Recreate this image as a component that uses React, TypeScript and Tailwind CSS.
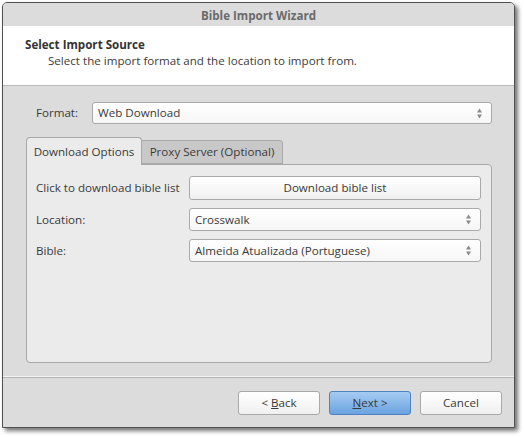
import React from "react";

function Spin() {
  return (
    <svg width="7" height="13" viewBox="0 0 7 13" className="shrink-0">
      <path d="M3.5 1.5 L6 5.5 L1 5.5 Z" fill="#8a8a8a" />
      <path d="M1 7.5 L6 7.5 L3.5 11.5 Z" fill="#8a8a8a" />
    </svg>
  );
}

function Combo({ text, className }: { text: string; className: string }) {
  return (
    <div
      className={
        "flex items-center justify-between rounded-[3px] border border-[#a9a9a9] bg-gradient-to-b from-white to-[#f6f6f6] pl-[5px] pr-[8px] " +
        className
      }
    >
      <span>{text}</span>
      <Spin />
    </div>
  );
}

export default function App() {
  return (
    <div
      className="w-[524px] h-[437px] bg-white pl-[2px] pt-[2px] text-[11.6px] text-[#3a3a3a]"
      style={{ fontFamily: '"Open Sans", "DejaVu Sans", sans-serif' }}
    >
      <div className="w-[513px] h-[426px] flex flex-col border border-[#505050] rounded-t-[5px] overflow-hidden shadow-[3px_3px_4px_rgba(0,0,0,0.55)] bg-[#dcdcdc]">
        {/* title bar */}
        <div className="h-[23px] shrink-0 flex items-center justify-center bg-[#dcdcdc] font-bold text-[#6a6a6a] pt-[2px]">
          Bible Import Wizard
        </div>
        {/* header */}
        <div className="h-[60px] shrink-0 bg-white border-b border-[#b9b9b9] pl-[22px] pt-[11px] leading-[16px]">
          <div className="font-bold text-[#333]">Select Import Source</div>
          <div className="pl-[23px] text-[#3c3c3c]">Select the import format and the location to import from.</div>
        </div>
        {/* body */}
        <div className="h-[291px] shrink-0 bg-[#dcdcdc] border-b border-[#f4f4f4] pl-[23px] pr-[22px] pt-[16px] flex flex-col">
          <div className="flex items-center h-[22px]">
            <span className="w-[66px] pl-[10px]">Format:</span>
            <Combo text="Web Download" className="flex-1 h-[22px]" />
          </div>
          <div className="flex items-end h-[28px] mt-[12px]">
            <div className="h-[28px] w-[116px] flex items-center justify-center bg-[#ebebeb] border border-b-0 border-[#a8a8a8] rounded-t-[4px] relative z-10 -mb-px">
              Download Options
            </div>
            <div className="h-[24px] w-[141px] flex items-center justify-center bg-[#c8c8c8] border border-[#a8a8a8] border-l-0 rounded-tr-[4px] text-[#3a3a3a]">
              Proxy Server (Optional)
            </div>
          </div>
          <div className="h-[199px] bg-[#ebebeb] border border-[#a8a8a8] rounded-b-[4px] rounded-tr-[4px] pl-[9px] pr-[10px] pt-[11px] flex flex-col gap-[8px]">
            <div className="flex items-center h-[24px]">
              <span className="w-[153px]">Click to download bible list</span>
              <div className="flex-1 h-[24px] flex items-center justify-center rounded-[3px] border border-[#a9a9a9] bg-gradient-to-b from-white to-[#f0f0f0]">
                Download bible list
              </div>
            </div>
            <div className="flex items-center h-[23px]">
              <span className="w-[153px]">Location:</span>
              <Combo text="Crosswalk" className="flex-1 h-[23px]" />
            </div>
            <div className="flex items-center h-[23px]">
              <span className="w-[153px]">Bible:</span>
              <Combo text="Almeida Atualizada (Portuguese)" className="flex-1 h-[23px]" />
            </div>
          </div>
        </div>
        {/* footer */}
        <div className="flex-1 bg-[#dcdcdc] border-t border-[#b5b5b5] flex justify-end items-start pt-[13px] pr-[12px] gap-[9px]">
          <div className="w-[82px] h-[24px] flex items-center justify-center rounded-[3px] border border-[#a9a9a9] bg-gradient-to-b from-white to-[#f0f0f0]">
            &lt; <span className="underline ml-[3px]">B</span>ack
          </div>
          <div className="w-[82px] h-[24px] flex items-center justify-center rounded-[3px] border border-[#4f80bf] bg-gradient-to-b from-[#a6cbf2] to-[#6aa3e0] text-[#3a3a3a]">
            <span className="underline">N</span>ext &gt;
          </div>
          <div className="w-[82px] h-[24px] flex items-center justify-center rounded-[3px] border border-[#a9a9a9] bg-gradient-to-b from-white to-[#f0f0f0]">
            Cancel
          </div>
        </div>
      </div>
    </div>
  );
}
